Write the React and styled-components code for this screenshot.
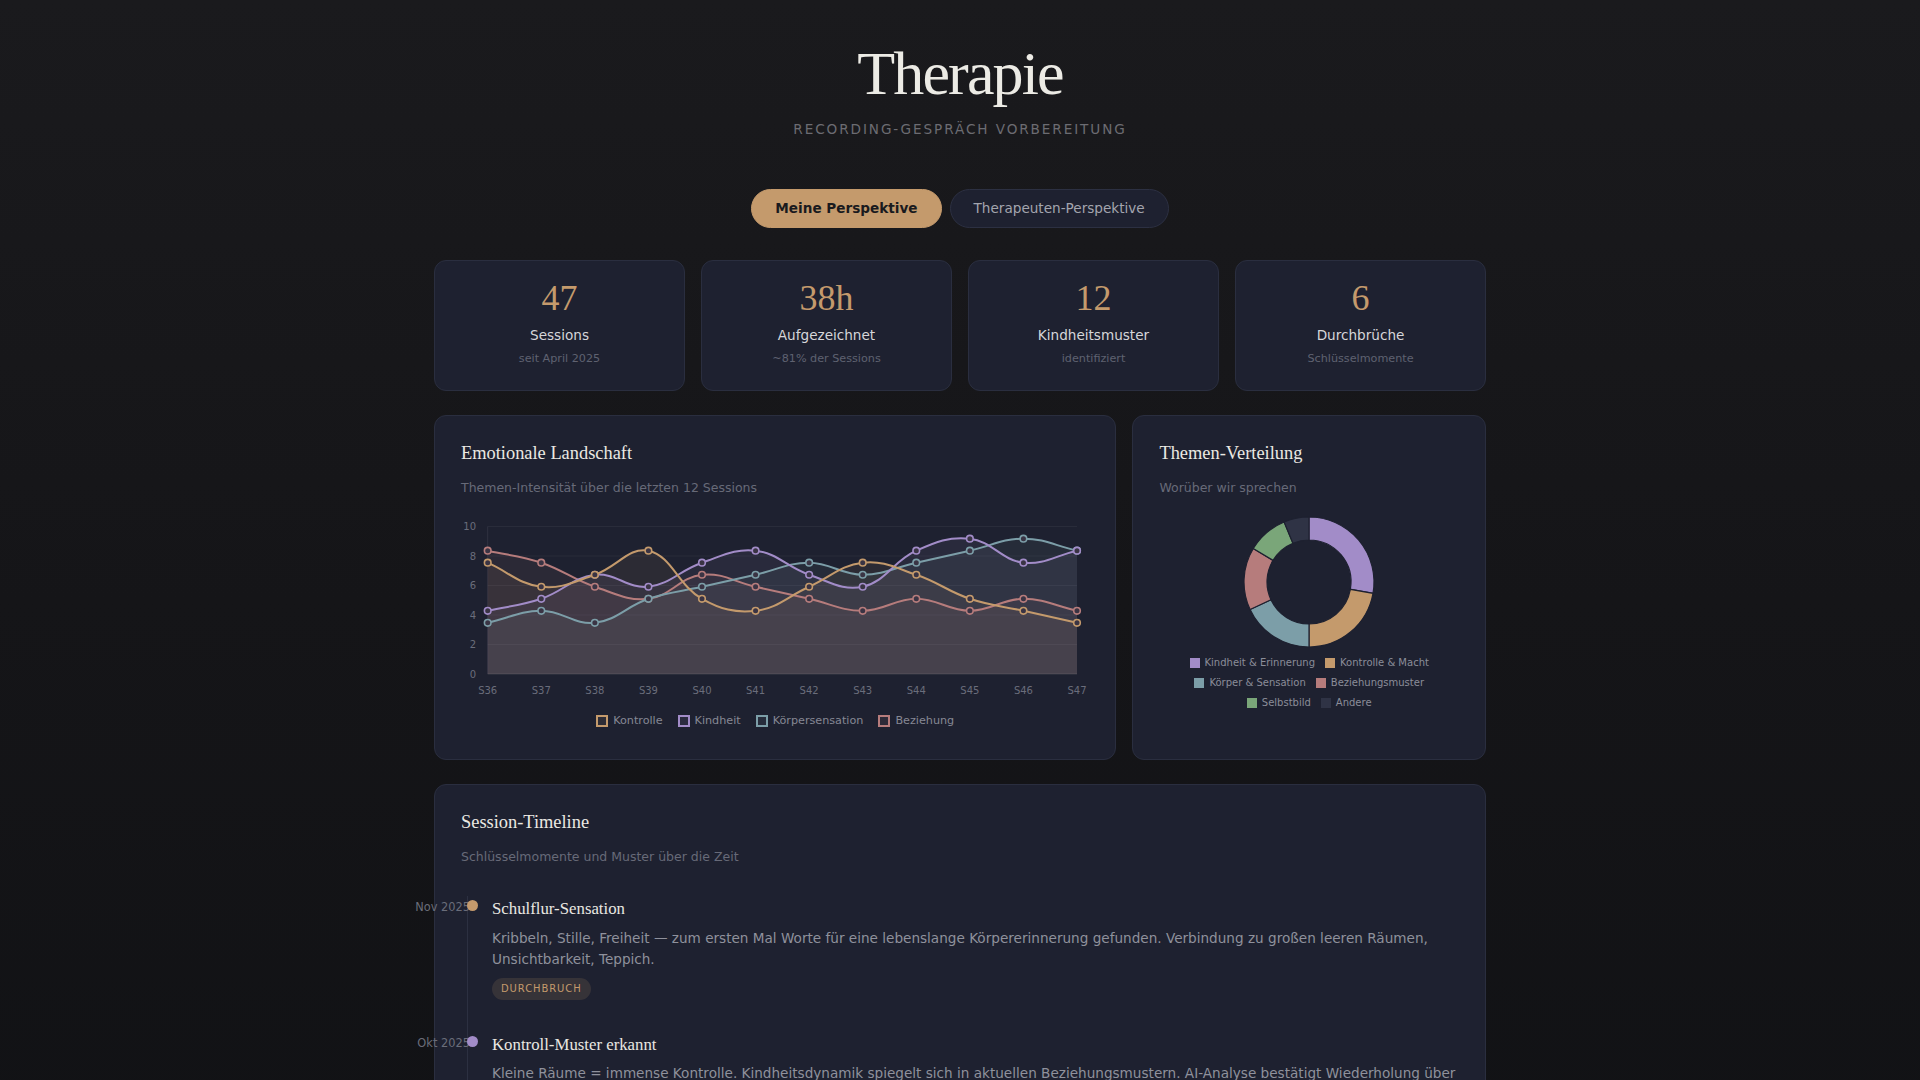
import React from "react";
import styled, { createGlobalStyle } from "styled-components";

const C = {
  gold: "#c49a6c",
  violet: "#a28cc8",
  teal: "#7c9ea8",
  rose: "#b67c7c",
  green: "#7aa679",
  slate: "#2f3345",
  card: "#1e2130",
  line: "#2a2e3f",
};

const GlobalStyle = createGlobalStyle`
  html, body {
    margin: 0;
    padding: 0;
  }
  body {
    min-height: 100vh;
    background: linear-gradient(180deg, #1a1a1d 0%, #151518 45%, #101114 100%);
    font-family: "DejaVu Sans", "Noto Sans", sans-serif;
    color: #d6d6da;
  }
`;

const Page = styled.div`
  max-width: 1100px;
  margin: 0 auto;
  padding: 39px 24px 60px;
  box-sizing: border-box;
`;

const Header = styled.header`
  text-align: center;
`;

const Title = styled.h1`
  margin: 0;
  font-family: "Liberation Serif", serif;
  font-weight: 400;
  font-size: 62px;
  line-height: 1.1;
  letter-spacing: -0.03em;
  color: #ecebe5;
`;

const Subtitle = styled.div`
  margin-top: 13px;
  font-size: 13.6px;
  line-height: 1.4;
  letter-spacing: 0.14em;
  text-transform: uppercase;
  color: #6c6c72;
`;

const Toggle = styled.div`
  display: flex;
  justify-content: center;
  gap: 8px;
  margin-top: 50px;
`;

const ToggleButton = styled.button`
  font-family: "DejaVu Sans", sans-serif;
  font-size: 13.6px;
  line-height: 1.2;
  padding: 10px 23px;
  border-radius: 999px;
  cursor: pointer;
  border: 1px solid ${(p) => (p.$active ? C.gold : "#2c3042")};
  background: ${(p) => (p.$active ? C.gold : C.card)};
  color: ${(p) => (p.$active ? "#1a1a1e" : "#a3a5ae")};
  font-weight: ${(p) => (p.$active ? 700 : 400)};
`;

const Stats = styled.div`
  display: grid;
  grid-template-columns: repeat(4, 1fr);
  gap: 16px;
  margin-top: 32px;
`;

const StatCard = styled.div`
  background: ${C.card};
  border: 1px solid ${C.line};
  border-radius: 12px;
  padding: 19px 16px 24px;
  text-align: center;
`;

const StatNumber = styled.div`
  font-family: "Liberation Serif", serif;
  font-size: 36px;
  line-height: 1;
  color: ${C.gold};
`;

const StatLabel = styled.div`
  margin-top: 10px;
  font-size: 13.6px;
  line-height: 1.4;
  color: #d6d6da;
`;

const StatSub = styled.div`
  margin-top: 6px;
  font-size: 11.2px;
  line-height: 1.4;
  color: #5f6270;
`;

const ChartsRow = styled.div`
  display: grid;
  grid-template-columns: minmax(0, 1.93fr) minmax(0, 1fr);
  gap: 16px;
  margin-top: 24px;
`;

const Card = styled.section`
  background: ${C.card};
  border: 1px solid ${C.line};
  border-radius: 12px;
  padding: 26px 26px 30px;
  margin-top: ${(p) => p.$mt || 0}px;
`;

const CardTitle = styled.h2`
  margin: 0;
  font-family: "Liberation Serif", serif;
  font-weight: 400;
  font-size: 18.4px;
  line-height: 1.2;
  color: #ebe9e3;
`;

const CardSub = styled.div`
  margin-top: 15px;
  font-size: 12.5px;
  line-height: 1.4;
  color: #676a78;
`;

const ChartSvg = styled.svg`
  display: block;
  margin-top: 13px;
  overflow: visible;
`;

const Legend = styled.div`
  display: flex;
  justify-content: center;
  gap: 15px;
  margin-top: 7px;
`;

const LegendItem = styled.div`
  display: flex;
  align-items: center;
  gap: 5px;
  font-size: 11.2px;
  line-height: 16px;
  color: #868894;
`;

const OutlineBox = styled.span`
  width: 12px;
  height: 12px;
  box-sizing: border-box;
  border: 2px solid ${(p) => p.$color};
  background: ${(p) => p.$color}1a;
`;

const DonutWrap = styled.div`
  display: flex;
  justify-content: center;
  margin-top: 13px;
`;

const DonutLegend = styled.div`
  display: flex;
  flex-direction: column;
  align-items: center;
  margin-top: 3px;
`;

const DonutRow = styled.div`
  display: flex;
  gap: 10px;
`;

const DonutItem = styled.div`
  display: flex;
  align-items: center;
  gap: 5px;
  font-size: 10px;
  line-height: 20px;
  color: #8b8d99;
`;

const SolidBox = styled.span`
  width: 10px;
  height: 10px;
  background: ${(p) => p.$color};
`;

const Timeline = styled.div`
  margin: 31px 0 0 6px;
  border-left: 1px solid #2c3041;
  display: flex;
  flex-direction: column;
  gap: 32px;
`;

const Entry = styled.div`
  position: relative;
  padding-left: 24px;
`;

const EntryDate = styled.span`
  position: absolute;
  top: 4px;
  right: calc(100% - 2px);
  font-size: 11.4px;
  line-height: 1.4;
  color: #6a6d7a;
  white-space: nowrap;
`;

const Dot = styled.span`
  position: absolute;
  top: 4px;
  left: -1px;
  width: 11px;
  height: 11px;
  border-radius: 50%;
  background: ${(p) => p.$color};
`;

const EntryTitle = styled.h3`
  margin: 0;
  font-family: "Liberation Serif", serif;
  font-weight: 400;
  font-size: 16.8px;
  line-height: 1.5;
  color: #eae8e2;
`;

const EntryText = styled.p`
  margin: 6px 0 0;
  font-size: 13.6px;
  line-height: 21px;
  color: #8f919c;
`;

const Badge = styled.span`
  display: inline-block;
  margin-top: 8px;
  padding: 4px 9px;
  border-radius: 999px;
  font-size: 10px;
  line-height: 14px;
  letter-spacing: 0.09em;
  text-transform: uppercase;
  color: ${(p) => p.$color};
  background: ${(p) => p.$color}26;
`;

/* ---------- line chart ---------- */

const W = 628;
const H = 196;
const X0 = 26.7;
const X1 = 616;
const YT = 16.5;
const YB = 164;
const sessions = ["S36", "S37", "S38", "S39", "S40", "S41", "S42", "S43", "S44", "S45", "S46", "S47"];
const lvl = (k) => 3.47 + 0.815 * k;

const series = [
  { name: "Kontrolle", color: C.gold, steps: [5, 3, 4, 6, 2, 1, 3, 5, 4, 2, 1, 0] },
  { name: "Kindheit", color: C.violet, steps: [1, 2, 4, 3, 5, 6, 4, 3, 6, 7, 5, 6] },
  { name: "Körpersensation", color: C.teal, steps: [0, 1, 0, 2, 3, 4, 5, 4, 5, 6, 7, 6] },
  { name: "Beziehung", color: C.rose, steps: [6, 5, 3, 2, 4, 3, 2, 1, 2, 1, 2, 1] },
];

const xAt = (i) => X0 + (i * (X1 - X0)) / 11;
const yAt = (v) => YB - (v / 10) * (YB - YT);

function spline(pts, t = 0.4) {
  const cps = pts.map((p, i) => {
    const a = pts[i - 1] || p;
    const b = pts[i + 1] || p;
    const d01 = Math.hypot(p[0] - a[0], p[1] - a[1]);
    const d12 = Math.hypot(b[0] - p[0], b[1] - p[1]);
    const sum = d01 + d12 || 1;
    const fa = (t * d01) / sum;
    const fb = (t * d12) / sum;
    const cap = (y) => Math.min(YB, Math.max(YT, y));
    return {
      prev: [p[0] - fa * (b[0] - a[0]), cap(p[1] - fa * (b[1] - a[1]))],
      next: [p[0] + fb * (b[0] - a[0]), cap(p[1] + fb * (b[1] - a[1]))],
    };
  });
  let d = `M${pts[0][0]},${pts[0][1]}`;
  for (let i = 1; i < pts.length; i++) {
    const a = cps[i - 1].next;
    const b = cps[i].prev;
    d += ` C${a[0]},${a[1]} ${b[0]},${b[1]} ${pts[i][0]},${pts[i][1]}`;
  }
  return d;
}

function LineChart() {
  const lines = series.map((s) => {
    const pts = s.steps.map((k, i) => [xAt(i), yAt(lvl(k))]);
    const d = spline(pts);
    return { ...s, pts, d, area: `${d} L${X1},${YB} L${X0},${YB} Z` };
  });
  return (
    <ChartSvg width={W} height={H} viewBox={`0 0 ${W} ${H}`}>
      {[0, 2, 4, 6, 8, 10].map((v) => (
        <g key={v}>
          <line x1={X0} x2={X1} y1={yAt(v)} y2={yAt(v)} stroke="rgba(255,255,255,0.05)" />
          <text x={15} y={yAt(v) + 3.5} textAnchor="end" fontSize="10" fill="#6a6d7b" fontFamily="DejaVu Sans, sans-serif">
            {v}
          </text>
        </g>
      ))}
      <line x1={X0} x2={X0} y1={YT} y2={YB} stroke="rgba(255,255,255,0.08)" />
      <line x1={X0} x2={X1} y1={YB} y2={YB} stroke="rgba(255,255,255,0.08)" />
      {lines.map((l) => (
        <path key={l.name + "a"} d={l.area} fill={l.color} fillOpacity="0.085" />
      ))}
      {[...lines].reverse().map((l) => (
        <g key={l.name}>
          <path d={l.d} fill="none" stroke={l.color} strokeWidth="2" strokeLinejoin="round" />
          {l.pts.map((p, i) => (
            <circle key={i} cx={p[0]} cy={p[1]} r="3.3" fill="#3a3444" stroke={l.color} strokeWidth="1.6" />
          ))}
        </g>
      ))}
      {sessions.map((s, i) => (
        <text key={s} x={xAt(i)} y={183.5} textAnchor="middle" fontSize="10" fill="#6a6d7b" fontFamily="DejaVu Sans, sans-serif">
          {s}
        </text>
      ))}
    </ChartSvg>
  );
}

/* ---------- donut ---------- */

const slices = [
  { name: "Kindheit & Erinnerung", color: C.violet, from: 0, to: 100 },
  { name: "Kontrolle & Macht", color: C.gold, from: 100, to: 180 },
  { name: "Körper & Sensation", color: C.teal, from: 180, to: 245 },
  { name: "Beziehungsmuster", color: C.rose, from: 245, to: 301 },
  { name: "Selbstbild", color: C.green, from: 301, to: 337.5 },
  { name: "Andere", color: C.slate, from: 337.5, to: 360 },
];

function arcPath(cx, cy, r0, r1, a0, a1) {
  const pt = (r, a) => {
    const rad = (a * Math.PI) / 180;
    return [cx + r * Math.sin(rad), cy - r * Math.cos(rad)];
  };
  const large = a1 - a0 > 180 ? 1 : 0;
  const [ax, ay] = pt(r1, a0);
  const [bx, by] = pt(r1, a1);
  const [cx2, cy2] = pt(r0, a1);
  const [dx, dy] = pt(r0, a0);
  return `M${ax},${ay} A${r1},${r1} 0 ${large} 1 ${bx},${by} L${cx2},${cy2} A${r0},${r0} 0 ${large} 0 ${dx},${dy} Z`;
}

function Donut() {
  return (
    <svg width="140" height="140" viewBox="0 0 140 140">
      {slices.map((s) => (
        <path key={s.name} d={arcPath(70, 72, 42, 65, s.from, s.to)} fill={s.color} stroke={C.card} strokeWidth="1.2" />
      ))}
    </svg>
  );
}

const stats = [
  { n: "47", label: "Sessions", sub: "seit April 2025" },
  { n: "38h", label: "Aufgezeichnet", sub: "~81% der Sessions" },
  { n: "12", label: "Kindheitsmuster", sub: "identifiziert" },
  { n: "6", label: "Durchbrüche", sub: "Schlüsselmomente" },
];

const entries = [
  {
    date: "Nov 2025",
    color: C.gold,
    title: "Schulflur-Sensation",
    text: "Kribbeln, Stille, Freiheit — zum ersten Mal Worte für eine lebenslange Körpererinnerung gefunden. Verbindung zu großen leeren Räumen, Unsichtbarkeit, Teppich.",
    badge: "Durchbruch",
  },
  {
    date: "Okt 2025",
    color: C.violet,
    title: "Kontroll-Muster erkannt",
    text: "Kleine Räume = immense Kontrolle. Kindheitsdynamik spiegelt sich in aktuellen Beziehungsmustern. AI-Analyse bestätigt Wiederholung über mehrere Sessions hinweg.",
    badge: "Muster",
  },
  {
    date: "Sep 2025",
    color: C.teal,
    title: "Erste Aufnahme",
    text: "Beginn der Aufzeichnungen. Vorbereitung des Recording-Gesprächs und erste Themen-Sammlung.",
    badge: "Start",
  },
];

export default function App() {
  return (
    <>
      <GlobalStyle />
      <Page>
        <Header>
          <Title>Therapie</Title>
          <Subtitle>Recording-Gespräch Vorbereitung</Subtitle>
        </Header>

        <Toggle>
          <ToggleButton $active>Meine Perspektive</ToggleButton>
          <ToggleButton>Therapeuten-Perspektive</ToggleButton>
        </Toggle>

        <Stats>
          {stats.map((s) => (
            <StatCard key={s.label}>
              <StatNumber>{s.n}</StatNumber>
              <StatLabel>{s.label}</StatLabel>
              <StatSub>{s.sub}</StatSub>
            </StatCard>
          ))}
        </Stats>

        <ChartsRow>
          <Card>
            <CardTitle>Emotionale Landschaft</CardTitle>
            <CardSub>Themen-Intensität über die letzten 12 Sessions</CardSub>
            <LineChart />
            <Legend>
              {series.map((s) => (
                <LegendItem key={s.name}>
                  <OutlineBox $color={s.color} />
                  {s.name}
                </LegendItem>
              ))}
            </Legend>
          </Card>
          <Card>
            <CardTitle>Themen-Verteilung</CardTitle>
            <CardSub>Worüber wir sprechen</CardSub>
            <DonutWrap>
              <Donut />
            </DonutWrap>
            <DonutLegend>
              {[0, 2, 4].map((i) => (
                <DonutRow key={i}>
                  {slices.slice(i, i + 2).map((s) => (
                    <DonutItem key={s.name}>
                      <SolidBox $color={s.color} />
                      {s.name}
                    </DonutItem>
                  ))}
                </DonutRow>
              ))}
            </DonutLegend>
          </Card>
        </ChartsRow>

        <Card $mt={24}>
          <CardTitle>Session-Timeline</CardTitle>
          <CardSub>Schlüsselmomente und Muster über die Zeit</CardSub>
          <Timeline>
            {entries.map((e) => (
              <Entry key={e.title}>
                <EntryDate>{e.date}</EntryDate>
                <Dot $color={e.color} />
                <EntryTitle>{e.title}</EntryTitle>
                <EntryText>{e.text}</EntryText>
                <Badge $color={e.color}>{e.badge}</Badge>
              </Entry>
            ))}
          </Timeline>
        </Card>
      </Page>
    </>
  );
}
